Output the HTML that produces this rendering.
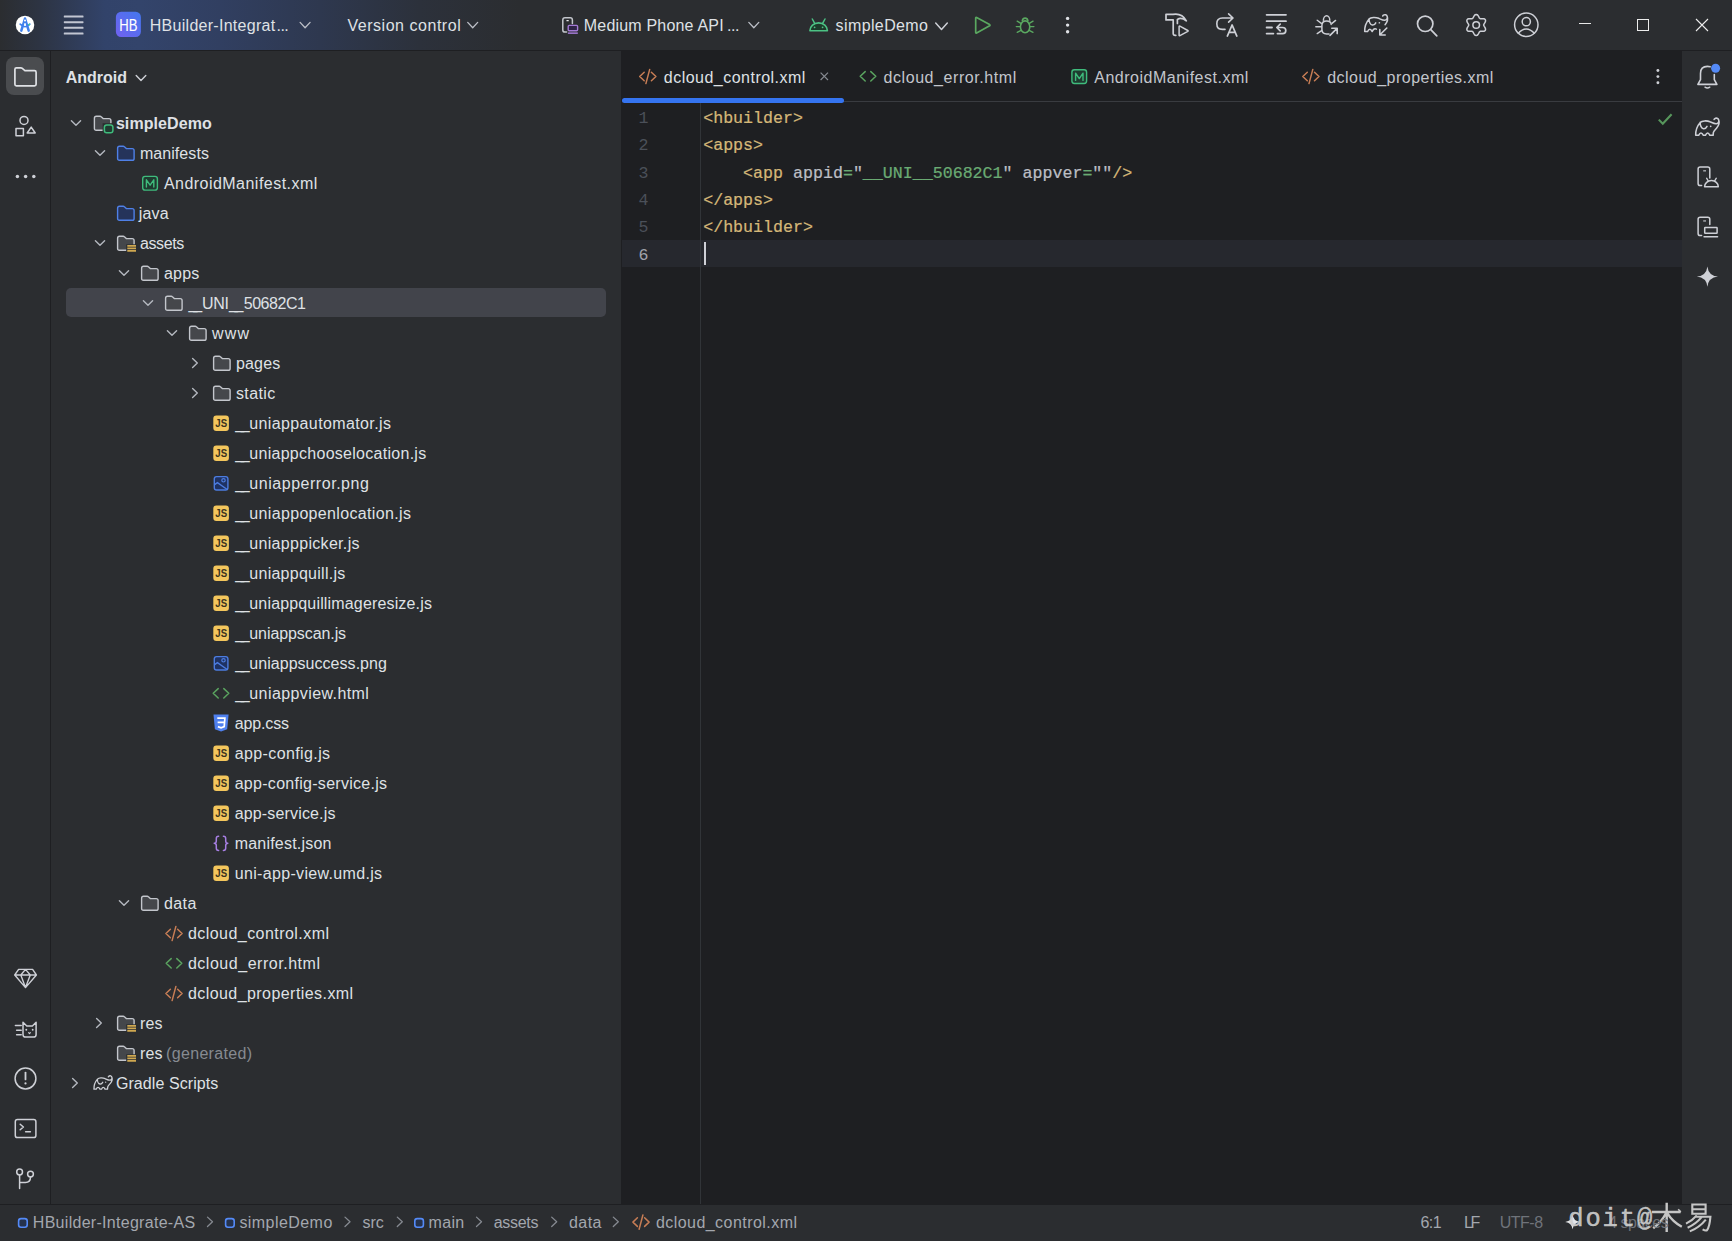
<!DOCTYPE html>
<html><head><meta charset="utf-8"><title>Android Studio</title><style>
html,body{margin:0;padding:0}
body{width:1732px;height:1241px;position:relative;overflow:hidden;background:#2b2d30;font-family:"Liberation Sans",sans-serif}
.t{position:absolute;white-space:pre;}
.m{position:absolute;white-space:pre;font:16.64px/27.45px "Liberation Mono",monospace;}
.c{-webkit-text-stroke-width:0.22px}
.a{position:absolute}
svg{position:absolute;overflow:visible}
</style></head>
<body>
<div class="a" style="left:0;top:0;width:1732px;height:50px;background:linear-gradient(to right,#2b2d30 0px,#2d3443 40px,#32436a 105px,#33446b 140px,#313f61 220px,#2e384f 320px,#2c313b 420px,#2b2d30 520px)"></div>
<div class="a" style="left:0;top:50px;width:1732px;height:1px;background:#1e1f22"></div>
<div class="a" style="left:50px;top:51px;width:1px;height:1153px;background:#1e1f22"></div>
<div class="a" style="left:621px;top:51px;width:1061px;height:1153px;background:#1e1f22"></div>
<div class="a" style="left:622px;top:101px;width:1060px;height:1px;background:#393b40"></div>
<div class="a" style="left:622px;top:97.5px;width:222px;height:5px;border-radius:2.5px;background:#3574f0"></div>
<div class="a" style="left:0;top:1204px;width:1732px;height:1px;background:#1e1f22"></div>
<div class="a" style="left:6px;top:57px;width:38px;height:38px;border-radius:8px;background:#4a4c4f"></div>
<div class="a" style="left:66px;top:287.5px;width:540px;height:29.7px;border-radius:5px;background:#42444b"></div>
<div style="position:absolute;left:622px;top:240px;width:1060px;height:27px;background:#26282e"></div><div style="position:absolute;left:700px;top:103px;width:1px;height:1101px;background:#313438"></div><span class="m" style="left:638.4px;top:104.65px;color:#4b5059">1</span><span class="m c" style="left:703.2px;top:104.65px"><span style="color:#d5b778">&lt;hbuilder&gt;</span></span><span class="m" style="left:638.4px;top:132.10px;color:#4b5059">2</span><span class="m c" style="left:703.2px;top:132.10px"><span style="color:#d5b778">&lt;apps&gt;</span></span><span class="m" style="left:638.4px;top:159.55px;color:#4b5059">3</span><span class="m c" style="left:703.2px;top:159.55px"><span style="color:#d5b778">    &lt;app</span><span style="color:#bcbec4"> appid</span><span style="color:#6aab73">=</span><span style="color:#bcbec4">"</span><span style="color:#6aab73">__UNI__50682C1</span><span style="color:#bcbec4">"</span><span style="color:#bcbec4"> appver</span><span style="color:#6aab73">=</span><span style="color:#bcbec4">""</span><span style="color:#d5b778">/&gt;</span></span><span class="m" style="left:638.4px;top:187.00px;color:#4b5059">4</span><span class="m c" style="left:703.2px;top:187.00px"><span style="color:#d5b778">&lt;/apps&gt;</span></span><span class="m" style="left:638.4px;top:214.45px;color:#4b5059">5</span><span class="m c" style="left:703.2px;top:214.45px"><span style="color:#d5b778">&lt;/hbuilder&gt;</span></span><span class="m" style="left:638.4px;top:241.90px;color:#a1a3ab">6</span><div style="position:absolute;left:704px;top:242px;width:1.5px;height:23px;background:#ced0d6"></div>
<svg width="0" height="0" style="position:absolute"><defs><symbol id="i-folder" viewBox="0 0 20 20" overflow="visible"><path d="M1.6 5.2Q1.6 3.3 3.5 3.3H7.2Q7.9 3.3 8.4 3.8L10.3 5.6H16.2Q18.1 5.6 18.1 7.5V15.4Q18.1 17.3 16.2 17.3H3.5Q1.6 17.3 1.6 15.4Z" fill="#45474b" stroke="#c3c6cc" stroke-width="1.4" stroke-linejoin="round"/></symbol><symbol id="i-bfolder" viewBox="0 0 20 20" overflow="visible"><path d="M1.6 5.2Q1.6 3.3 3.5 3.3H7.2Q7.9 3.3 8.4 3.8L10.3 5.6H16.2Q18.1 5.6 18.1 7.5V15.4Q18.1 17.3 16.2 17.3H3.5Q1.6 17.3 1.6 15.4Z" fill="#25335a" stroke="#4f80e6" stroke-width="1.4" stroke-linejoin="round"/></symbol><symbol id="i-module" viewBox="0 0 20 20" overflow="visible"><g transform="translate(0.8 0)"><path d="M1.6 5.2Q1.6 3.3 3.5 3.3H7.2Q7.9 3.3 8.4 3.8L10.3 5.6H16.2Q18.1 5.6 18.1 7.5V15.4Q18.1 17.3 16.2 17.3H3.5Q1.6 17.3 1.6 15.4Z" fill="#45474b" stroke="#c3c6cc" stroke-width="1.4" stroke-linejoin="round"/></g><rect x="10.6" y="10.2" width="12" height="12" fill="#2b2d30"/><rect x="12.4" y="12" width="8.5" height="7.8" rx="2.3" fill="#1f3b30" stroke="#3fbb7c" stroke-width="1.5"/></symbol><symbol id="i-resfolder" viewBox="0 0 20 20" overflow="visible"><path d="M1.6 5.2Q1.6 3.3 3.5 3.3H7.2Q7.9 3.3 8.4 3.8L10.3 5.6H16.2Q18.1 5.6 18.1 7.5V15.4Q18.1 17.3 16.2 17.3H3.5Q1.6 17.3 1.6 15.4Z" fill="#45474b" stroke="#c3c6cc" stroke-width="1.4" stroke-linejoin="round"/><rect x="10.2" y="11.3" width="11" height="9" fill="#2b2d30"/><path d="M11.3 12.9H20M11.3 15.4H20M11.3 17.9H20" stroke="#cfa850" stroke-width="1.6" fill="none"/></symbol><symbol id="i-manifest" viewBox="0 0 20 20" overflow="visible"><rect x="2.7" y="3.4" width="14.7" height="13.7" rx="2.4" fill="#1f3b30" stroke="#3fbb7c" stroke-width="1.4"/><path d="M6.4 14V6.8L10.1 12.2L13.8 6.8V14" fill="none" stroke="#3fbb7c" stroke-width="1.4" stroke-linejoin="round" stroke-linecap="round"/></symbol><symbol id="i-js" viewBox="0 0 20 20" overflow="visible"><rect x="2.3" y="2.4" width="15.6" height="15.5" rx="3" fill="#f3c65c"/><text x="10.2" y="14.1" text-anchor="middle" font-family="Liberation Sans" font-weight="700" font-size="10.6" fill="#3a3320" textLength="11.8" lengthAdjust="spacingAndGlyphs">JS</text></symbol><symbol id="i-img" viewBox="0 0 20 20" overflow="visible"><rect x="3.3" y="3.6" width="13.6" height="13.4" rx="2.2" fill="#1f3262" stroke="#4c7cdf" stroke-width="1.4"/><circle cx="12.5" cy="7.3" r="1.7" fill="none" stroke="#4c7cdf" stroke-width="1.2"/><path d="M3.6 11.6L6.4 9.6L16.6 16.8" fill="none" stroke="#4c7cdf" stroke-width="1.3"/></symbol><symbol id="i-html" viewBox="0 0 20 20" overflow="visible"><path d="M7.2 5.6L2.2 10.3L7.2 15M12.8 5.6L17.8 10.3L12.8 15" fill="none" stroke="#5aa35f" stroke-width="1.5" stroke-linecap="round" stroke-linejoin="round"/></symbol><symbol id="i-xml" viewBox="0 0 20 20" overflow="visible"><path d="M6.4 6.2L1.9 10.5L6.4 14.8M13.6 6.2L18.1 10.5L13.6 14.8M11.9 3.4L8.1 17.6" fill="none" stroke="#c77d55" stroke-width="1.5" stroke-linecap="round" stroke-linejoin="round"/></symbol><symbol id="i-css" viewBox="0 0 20 20" overflow="visible"><path d="M2.5 1.4H17.6L16.2 16.2L10.05 18.6L3.9 16.2Z" fill="#4f80ee"/><path d="M6.3 5.2H13.9L13.2 13.6L10.05 14.8L6.9 13.6M6.6 9.3H13.5" fill="none" stroke="#fff" stroke-width="1.7"/></symbol><symbol id="i-json" viewBox="0 0 20 20" overflow="visible"><path d="M7.6 3.2Q5.3 3.2 5.3 5.4V8Q5.3 10.3 3.2 10.3Q5.3 10.3 5.3 12.6V15.2Q5.3 17.4 7.6 17.4M12.4 3.2Q14.7 3.2 14.7 5.4V8Q14.7 10.3 16.8 10.3Q14.7 10.3 14.7 12.6V15.2Q14.7 17.4 12.4 17.4" fill="none" stroke="#a77fe3" stroke-width="1.5" stroke-linecap="round" stroke-linejoin="round"/></symbol><symbol id="i-gradle" viewBox="0 0 20 20" overflow="visible"><g transform="translate(1.4 2.2) scale(0.78)"><path d="M0.7 17.9C0.5 13 2.2 8.5 5.2 5C7 3.2 12 3 15 4.4C17.5 5.5 19.5 6.6 21.3 6.4C23.3 6.1 24.2 4.4 23.7 2.6C23.2 0.8 21.2 0.2 19.9 1.2C19.3 1.7 19.1 2.1 19.1 2.1M23.7 2.6C24.8 5.5 23.5 8.5 21.5 10.8C20 12.5 18.8 13.5 18.4 15L18.1 17.9H14.9Q12.6 13.3 10.4 17.9H8.4Q5.9 13.3 3.6 17.9H0.7M5.2 5C5 8 6.5 11 8.5 11.3C10 11.5 11.5 10 12 9" fill="none" stroke="#ced0d6" stroke-width="1.66667" stroke-linecap="round" stroke-linejoin="round" /><circle cx="15.7" cy="8.9" r="0.85" fill="#ced0d6"/></g></symbol><g id="cd"><path d="M-4.6 -2.3L0 2.3L4.6 -2.3" fill="none" stroke="#b4b8bf" stroke-width="1.4" stroke-linecap="round" stroke-linejoin="round"/></g><g id="cr"><path d="M-2.4 -4.6L2.3 0L-2.4 4.6" fill="none" stroke="#b4b8bf" stroke-width="1.4" stroke-linecap="round" stroke-linejoin="round"/></g></defs></svg><svg width="20" height="20" style="left:92px;top:113px"><use href="#i-module"/></svg><svg width="1" height="1" style="left:76px;top:123.2px"><use href="#cd"/></svg><svg width="20" height="20" style="left:116px;top:143px"><use href="#i-bfolder"/></svg><svg width="1" height="1" style="left:100px;top:153.2px"><use href="#cd"/></svg><svg width="20" height="20" style="left:140px;top:173px"><use href="#i-manifest"/></svg><svg width="20" height="20" style="left:116px;top:203px"><use href="#i-bfolder"/></svg><svg width="20" height="20" style="left:116px;top:233px"><use href="#i-resfolder"/></svg><svg width="1" height="1" style="left:100px;top:243.2px"><use href="#cd"/></svg><svg width="20" height="20" style="left:140px;top:263px"><use href="#i-folder"/></svg><svg width="1" height="1" style="left:124px;top:273.2px"><use href="#cd"/></svg><svg width="20" height="20" style="left:164px;top:293px"><use href="#i-folder"/></svg><svg width="1" height="1" style="left:148px;top:303.2px"><use href="#cd"/></svg><svg width="20" height="20" style="left:188px;top:323px"><use href="#i-folder"/></svg><svg width="1" height="1" style="left:172px;top:333.2px"><use href="#cd"/></svg><svg width="20" height="20" style="left:212px;top:353px"><use href="#i-folder"/></svg><svg width="1" height="1" style="left:195.4px;top:363.2px"><use href="#cr"/></svg><svg width="20" height="20" style="left:212px;top:383px"><use href="#i-folder"/></svg><svg width="1" height="1" style="left:195.4px;top:393.2px"><use href="#cr"/></svg><svg width="20" height="20" style="left:211.1px;top:413px"><use href="#i-js"/></svg><svg width="20" height="20" style="left:211.1px;top:443px"><use href="#i-js"/></svg><svg width="20" height="20" style="left:211.1px;top:473px"><use href="#i-img"/></svg><svg width="20" height="20" style="left:211.1px;top:503px"><use href="#i-js"/></svg><svg width="20" height="20" style="left:211.1px;top:533px"><use href="#i-js"/></svg><svg width="20" height="20" style="left:211.1px;top:563px"><use href="#i-js"/></svg><svg width="20" height="20" style="left:211.1px;top:593px"><use href="#i-js"/></svg><svg width="20" height="20" style="left:211.1px;top:623px"><use href="#i-js"/></svg><svg width="20" height="20" style="left:211.1px;top:653px"><use href="#i-img"/></svg><svg width="20" height="20" style="left:211.1px;top:683px"><use href="#i-html"/></svg><svg width="20" height="20" style="left:211.1px;top:713px"><use href="#i-css"/></svg><svg width="20" height="20" style="left:211.1px;top:743px"><use href="#i-js"/></svg><svg width="20" height="20" style="left:211.1px;top:773px"><use href="#i-js"/></svg><svg width="20" height="20" style="left:211.1px;top:803px"><use href="#i-js"/></svg><svg width="20" height="20" style="left:211.1px;top:833px"><use href="#i-json"/></svg><svg width="20" height="20" style="left:211.1px;top:863px"><use href="#i-js"/></svg><svg width="20" height="20" style="left:140px;top:893px"><use href="#i-folder"/></svg><svg width="1" height="1" style="left:124px;top:903.2px"><use href="#cd"/></svg><svg width="20" height="20" style="left:164px;top:923px"><use href="#i-xml"/></svg><svg width="20" height="20" style="left:164px;top:953px"><use href="#i-html"/></svg><svg width="20" height="20" style="left:164px;top:983px"><use href="#i-xml"/></svg><svg width="20" height="20" style="left:116px;top:1013px"><use href="#i-resfolder"/></svg><svg width="1" height="1" style="left:99.4px;top:1023.2px"><use href="#cr"/></svg><svg width="20" height="20" style="left:116px;top:1043px"><use href="#i-resfolder"/></svg><svg width="20" height="20" style="left:92px;top:1073px"><use href="#i-gradle"/></svg><svg width="1" height="1" style="left:75.4px;top:1083.2px"><use href="#cr"/></svg><svg width="1732" height="1241" style="left:0;top:0"><defs><linearGradient id="hbg" x1="1" y1="0" x2="0" y2="1"><stop offset="0" stop-color="#4377ee"/><stop offset="1" stop-color="#7161f0"/></linearGradient></defs><circle cx="25" cy="24.9" r="9.25" fill="#fff"/><path d="M25 18.6L21.3 30.6M25 18.6L28.7 30.6" fill="none" stroke="#4081ec" stroke-width="2.5" stroke-linecap="round"/><path d="M20.2 24.2Q25 29 29.8 24.2" fill="none" stroke="#4081ec" stroke-width="1.7" stroke-linecap="round"/><circle cx="25" cy="20.6" r="1" fill="#fff"/><path d="M23.9 25.8H26.1L25.6 23.2H24.4Z" fill="#fff"/><circle cx="29.3" cy="24.6" r="0.9" fill="#3ddc84"/><rect x="63.8" y="15.5" width="19.7" height="2" rx="0.6" fill="#c2c6d2"/><rect x="63.8" y="21.2" width="19.7" height="2" rx="0.6" fill="#c2c6d2"/><rect x="63.8" y="26.8" width="19.7" height="2" rx="0.6" fill="#c2c6d2"/><rect x="63.8" y="32.5" width="19.7" height="2" rx="0.6" fill="#c2c6d2"/><rect x="115.9" y="11.8" width="25" height="25.2" rx="5.2" fill="url(#hbg)"/><text x="119.3" y="30.8" font-family="Liberation Sans" font-size="16.2" fill="#fff" stroke="#fff" stroke-width="0.12" textLength="18.2" lengthAdjust="spacingAndGlyphs">HB</text><path d="M300.1 22.4L305.1 27.8L310.1 22.4" fill="none" stroke="#bcbfc7" stroke-width="1.3" stroke-linecap="round" stroke-linejoin="round" /><path d="M467.7 22.4L472.7 27.8L477.7 22.4" fill="none" stroke="#bcbfc7" stroke-width="1.3" stroke-linecap="round" stroke-linejoin="round" /><path d="M748.8 22.4L753.8 27.8L758.8 22.4" fill="none" stroke="#bcbfc7" stroke-width="1.3" stroke-linecap="round" stroke-linejoin="round" /><path d="M935.7 23L941.5 29.4L947.3 23" fill="none" stroke="#ced0d6" stroke-width="1.5" stroke-linecap="round" stroke-linejoin="round" /><path d="M566.6 32.1H565Q562.8 32.1 562.8 29.9V20Q562.8 17.8 565 17.8H570.2Q572.4 17.8 572.4 20V23.6" fill="none" stroke="#c3c6cc" stroke-width="1.5" stroke-linecap="round" stroke-linejoin="round" /><rect x="566.4" y="20.1" width="2.4" height="1.1" rx="0.5" fill="#e8e9ec"/><rect x="568.2" y="25.4" width="9.4" height="5.3" rx="1" fill="#2f2447" stroke="#a47ad6" stroke-width="1.4"/><rect x="567.9" y="32.4" width="9.9" height="1.5" fill="#a47ad6"/><path d="M809.9 30.8A8.75 7.9 0 0 1 827.4 30.8Z" fill="#1d3b2b" stroke="#4cc284" stroke-width="1.6" stroke-linejoin="round"/><path d="M812.3 19L814.7 23.4M825 19L822.6 23.4" fill="none" stroke="#4cc284" stroke-width="1.5" stroke-linecap="round" stroke-linejoin="round" /><circle cx="814.6" cy="27.3" r="0.9" fill="#4cc284"/><circle cx="822.6" cy="27.3" r="0.9" fill="#4cc284"/><path d="M975.7 18V32.4Q975.7 33.4 976.6 32.9L989.6 25.8Q990.4 25.2 989.6 24.6L976.6 17.5Q975.7 17 975.7 18Z" fill="none" stroke="#5aa860" stroke-width="1.7" stroke-linecap="round" stroke-linejoin="round" /><ellipse cx="1025.1" cy="26.8" rx="4.7" ry="5.9" fill="none" stroke="#5aa860" stroke-width="1.6" stroke-linecap="round" stroke-linejoin="round" /><path d="M1022.3 20.6A2.9 3.4 0 0 1 1027.9 20.6" fill="none" stroke="#5aa860" stroke-width="1.6" stroke-linecap="round" stroke-linejoin="round" /><path d="M1020.4 26.6H1016.3M1029.8 26.6H1033.9M1020.9 23.4L1017.2 21.2M1029.3 23.4L1033 21.2M1021 30.4L1017.2 32.3M1029.2 30.4L1033 32.3" fill="none" stroke="#5aa860" stroke-width="1.4" stroke-linecap="round" stroke-linejoin="round" /><circle cx="1067.6" cy="18.4" r="1.7" fill="#dfe1e5"/><circle cx="1067.6" cy="25.1" r="1.7" fill="#dfe1e5"/><circle cx="1067.6" cy="31.8" r="1.7" fill="#dfe1e5"/><path d="M1173.2 19.9H1166V14.3H1173Q1182 12.8 1186.3 20.8Q1181.4 17 1177.4 19.4V23.4M1173.2 19.9V33.6Q1173.2 35.7 1175.8 35.3" fill="none" stroke="#ced0d6" stroke-width="1.7" stroke-linecap="round" stroke-linejoin="round" /><path d="M1179.1 26.6V35.2Q1179.1 36 1179.9 35.6L1187.8 31.3Q1188.5 30.9 1187.8 30.5L1179.9 26.2Q1179.1 25.8 1179.1 26.6Z" fill="none" stroke="#ced0d6" stroke-width="1.5" stroke-linecap="round" stroke-linejoin="round" /><path d="M1225 29.4H1222.4Q1216.8 29.4 1216.8 23.7Q1216.8 18 1222.4 18H1232.6M1228.6 13.8L1233 18L1228.6 22.2" fill="none" stroke="#ced0d6" stroke-width="1.6" stroke-linecap="round" stroke-linejoin="round" /><path d="M1227.4 36L1232.1 25L1236.8 36M1229 32.4H1235.2" fill="none" stroke="#ced0d6" stroke-width="1.8" stroke-linecap="round" stroke-linejoin="round" /><path d="M1266.6 14.8H1286M1266.6 21.2H1286M1266.6 27.5H1272M1266.6 33.6H1273.4" fill="none" stroke="#ced0d6" stroke-width="1.8" stroke-linecap="round" stroke-linejoin="round" stroke-linecap="butt"/><path d="M1277.4 33.6H1282.6Q1285.8 33.6 1285.8 30.5Q1285.8 27.5 1282.6 27.5H1277M1280.2 24.2L1276.8 27.5L1280.2 30.8" fill="none" stroke="#ced0d6" stroke-width="1.7" stroke-linecap="round" stroke-linejoin="round" /><path d="M1329 33.9H1326.6Q1321.9 33.9 1321.9 29.2V25.6Q1321.9 21 1326.6 21Q1331 21 1331.2 24.4" fill="none" stroke="#ced0d6" stroke-width="1.5" stroke-linecap="round" stroke-linejoin="round" /><path d="M1323.4 20.2A3.2 4.4 0 0 1 1329.8 20.2" fill="none" stroke="#ced0d6" stroke-width="1.5" stroke-linecap="round" stroke-linejoin="round" /><path d="M1321.4 23.4L1317.2 20.2M1321.4 26.8H1315.8M1321.6 30.6L1317.2 33.6M1332 23.4L1335.6 20.4" fill="none" stroke="#ced0d6" stroke-width="1.4" stroke-linecap="round" stroke-linejoin="round" /><path d="M1330 35.4L1337 28.4M1331.8 28.2H1337.2V33.6" fill="none" stroke="#ced0d6" stroke-width="1.6" stroke-linecap="round" stroke-linejoin="round" /><g transform="translate(1364 14) scale(0.98)"><path d="M0.7 17.9C0.5 13 2.2 8.5 5.2 5C7 3.2 12 3 15 4.4C17.5 5.5 19.5 6.6 21.3 6.4C23.3 6.1 24.2 4.4 23.7 2.6C23.2 0.8 21.2 0.2 19.9 1.2C19.3 1.7 19.1 2.1 19.1 2.1M23.7 2.6C24.8 5.5 23.5 8.5 21.5 10.9M0.7 17.9H3.6Q5.9 13.3 8.4 17.9Q10.2 14 12.6 15.4M5.2 5C5 8 6.5 11 8.5 11.3C10 11.5 11.5 10 12 9" fill="none" stroke="#ced0d6" stroke-width="1.55" stroke-linecap="round" stroke-linejoin="round" /><circle cx="15.7" cy="8.9" r="0.85" fill="#ced0d6"/></g><path d="M1386.8 28L1380 34.8M1379.8 29.6V35H1385.2" fill="none" stroke="#ced0d6" stroke-width="1.6" stroke-linecap="round" stroke-linejoin="round" /><circle cx="1425.2" cy="23.8" r="7.7" fill="none" stroke="#ced0d6" stroke-width="1.7" stroke-linecap="round" stroke-linejoin="round" /><path d="M1430.8 29.6L1436.8 35.8" fill="none" stroke="#ced0d6" stroke-width="1.7" stroke-linecap="round" stroke-linejoin="round" /><path d="M1476.20 14.45L1477.10 14.70L1477.90 15.37L1478.53 16.31L1479.01 17.27L1479.44 18.06L1479.92 18.55L1480.59 18.73L1481.49 18.70L1482.56 18.64L1483.69 18.72L1484.67 19.07L1485.34 19.72L1485.57 20.63L1485.39 21.66L1484.89 22.67L1484.30 23.57L1483.83 24.33L1483.65 25.00L1483.83 25.67L1484.30 26.43L1484.89 27.33L1485.39 28.34L1485.57 29.37L1485.34 30.27L1484.67 30.93L1483.69 31.28L1482.56 31.36L1481.49 31.30L1480.59 31.27L1479.92 31.45L1479.44 31.94L1479.01 32.73L1478.53 33.69L1477.90 34.63L1477.10 35.30L1476.20 35.55L1475.30 35.30L1474.50 34.63L1473.87 33.69L1473.39 32.73L1472.96 31.94L1472.48 31.45L1471.81 31.27L1470.91 31.30L1469.84 31.36L1468.71 31.28L1467.73 30.93L1467.06 30.28L1466.83 29.37L1467.01 28.34L1467.51 27.33L1468.10 26.43L1468.57 25.67L1468.75 25.00L1468.57 24.33L1468.10 23.57L1467.51 22.67L1467.01 21.66L1466.83 20.63L1467.06 19.72L1467.73 19.07L1468.71 18.72L1469.84 18.64L1470.91 18.70L1471.81 18.73L1472.48 18.55L1472.96 18.06L1473.39 17.27L1473.87 16.31L1474.50 15.37L1475.30 14.70Z" fill="none" stroke="#ced0d6" stroke-width="1.5" stroke-linecap="round" stroke-linejoin="round" /><circle cx="1476.2" cy="25" r="3.3" fill="none" stroke="#ced0d6" stroke-width="1.5" stroke-linecap="round" stroke-linejoin="round" /><circle cx="1526.3" cy="24.7" r="11.7" fill="none" stroke="#ced0d6" stroke-width="1.5" stroke-linecap="round" stroke-linejoin="round" /><circle cx="1526.3" cy="21.7" r="4.1" fill="none" stroke="#ced0d6" stroke-width="1.5" stroke-linecap="round" stroke-linejoin="round" /><path d="M1518.3 33.2Q1526.3 24.6 1534.3 33.2" fill="none" stroke="#ced0d6" stroke-width="1.5" stroke-linecap="round" stroke-linejoin="round" /><rect x="1579" y="23" width="12" height="1" fill="#e8e8e8"/><rect x="1637.5" y="19.5" width="11" height="11" fill="none" stroke="#ededed" stroke-width="1"/><path d="M1696 19L1708 31M1708 19L1696 31" stroke="#ededed" stroke-width="1.1" fill="none"/><path d="M14.9 84.2V69.4Q14.9 67.9 16.4 67.9H20.9Q21.7 67.9 22.3 68.4L24.9 70.6H34.5Q36.1 70.6 36.1 72.2V84.2Q36.1 85.8 34.5 85.8H16.4Q14.9 85.8 14.9 84.2Z" fill="none" stroke="#dfe1e5" stroke-width="1.7" stroke-linecap="round" stroke-linejoin="round" /><circle cx="24" cy="120.4" r="4" fill="none" stroke="#ced0d6" stroke-width="1.5" stroke-linecap="round" stroke-linejoin="round" /><rect x="16" y="128.6" width="7.4" height="7.2" fill="none" stroke="#ced0d6" stroke-width="1.5" stroke-linecap="round" stroke-linejoin="round" /><path d="M31.2 127.1L35.2 133H27.2Z" fill="none" stroke="#ced0d6" stroke-width="1.5" stroke-linecap="round" stroke-linejoin="round" /><circle cx="17.4" cy="176.5" r="1.75" fill="#ced0d6"/><circle cx="25.6" cy="176.5" r="1.75" fill="#ced0d6"/><circle cx="33.8" cy="176.5" r="1.75" fill="#ced0d6"/><path d="M18.6 969.4H32.6L36.4 975L25.5 987.6L14.7 975ZM14.7 975H36.4M25.5 969.4L20.8 975L25.5 987.6L30.3 975Z" fill="none" stroke="#ced0d6" stroke-width="1.4" stroke-linecap="round" stroke-linejoin="round" /><path d="M23 1022.3L26.8 1026H32.4L36.1 1022.3V1034.4Q36.1 1037 33.5 1037H25.6Q23 1037 23 1034.4Z" fill="none" stroke="#ced0d6" stroke-width="1.5" stroke-linecap="round" stroke-linejoin="round" /><circle cx="26.3" cy="1029.8" r="0.95" fill="#ced0d6"/><circle cx="32.7" cy="1029.8" r="0.95" fill="#ced0d6"/><path d="M28.6 1032.6L29.5 1033.6L30.4 1032.6" fill="none" stroke="#ced0d6" stroke-width="1.1" stroke-linecap="round" stroke-linejoin="round" /><path d="M15.4 1025.6H21.2M16.6 1030.2H21.2M16.6 1034.7H21.2" fill="none" stroke="#ced0d6" stroke-width="1.5" stroke-linecap="round" stroke-linejoin="round" /><circle cx="25.5" cy="1078.5" r="10.4" fill="none" stroke="#ced0d6" stroke-width="1.5" stroke-linecap="round" stroke-linejoin="round" /><path d="M25.5 1072.6V1079.4" fill="none" stroke="#ced0d6" stroke-width="1.8" stroke-linecap="round" stroke-linejoin="round" /><circle cx="25.5" cy="1083.4" r="1.1" fill="#ced0d6"/><rect x="15.3" y="1119.5" width="20.6" height="18.1" rx="2.2" fill="none" stroke="#ced0d6" stroke-width="1.5" stroke-linecap="round" stroke-linejoin="round" /><path d="M20.2 1124.2L23.4 1127L20.2 1129.8M25.6 1131.8H30.4" fill="none" stroke="#ced0d6" stroke-width="1.5" stroke-linecap="round" stroke-linejoin="round" /><circle cx="19.6" cy="1172" r="2.9" fill="none" stroke="#ced0d6" stroke-width="1.5" stroke-linecap="round" stroke-linejoin="round" /><circle cx="30.5" cy="1174.1" r="2.9" fill="none" stroke="#ced0d6" stroke-width="1.5" stroke-linecap="round" stroke-linejoin="round" /><path d="M19.6 1175V1188.6M30.5 1177.1Q30.5 1182.6 25.4 1182.6H19.6" fill="none" stroke="#ced0d6" stroke-width="1.5" stroke-linecap="round" stroke-linejoin="round" /><path d="M136.2 75.6L141 80.6L145.8 75.6" fill="none" stroke="#ced0d6" stroke-width="1.4" stroke-linecap="round" stroke-linejoin="round" /><path transform="translate(637.8 66)" d="M6.4 6.2L1.9 10.5L6.4 14.8M13.6 6.2L18.1 10.5L13.6 14.8M11.9 3.4L8.1 17.6" fill="none" stroke="#c77d55" stroke-width="1.5" stroke-linecap="round" stroke-linejoin="round" /><path transform="translate(858 66)" d="M7.2 5.6L2.2 10.3L7.2 15M12.8 5.6L17.8 10.3L12.8 15" fill="none" stroke="#5aa35f" stroke-width="1.5" stroke-linecap="round" stroke-linejoin="round" /><g transform="translate(1069.2 66.4)"><rect x="2.7" y="3.4" width="14.7" height="13.7" rx="2.4" fill="#1f3b30" stroke="#3fbb7c" stroke-width="1.4"/><path d="M6.4 14V6.8L10.1 12.2L13.8 6.8V14" fill="none" stroke="#3fbb7c" stroke-width="1.4" stroke-linecap="round" stroke-linejoin="round" /></g><path transform="translate(1300.9 66)" d="M6.4 6.2L1.9 10.5L6.4 14.8M13.6 6.2L18.1 10.5L13.6 14.8M11.9 3.4L8.1 17.6" fill="none" stroke="#c77d55" stroke-width="1.5" stroke-linecap="round" stroke-linejoin="round" /><path d="M820.6 72.6L828 80M828 72.6L820.6 80" stroke="#868a91" stroke-width="1.2" fill="none"/><circle cx="1657.9" cy="70.5" r="1.45" fill="#ced0d6"/><circle cx="1657.9" cy="76.6" r="1.45" fill="#ced0d6"/><circle cx="1657.9" cy="82.7" r="1.45" fill="#ced0d6"/><path d="M1658.8 119.6L1662.8 123.8L1671.6 114.2" fill="none" stroke="#57965c" stroke-width="2.1"/><path d="M1697.9 84.4H1716.9L1714.3 79.6V74.6M1697.9 84.4L1700.5 79.6V73.4Q1700.5 66.4 1707.4 66.4Q1709 66.4 1710.2 66.8" fill="none" stroke="#ced0d6" stroke-width="1.6" stroke-linecap="round" stroke-linejoin="round" /><path d="M1705 87.2Q1707.4 88.8 1709.8 87.2" fill="none" stroke="#ced0d6" stroke-width="1.4" stroke-linecap="round" stroke-linejoin="round" /><circle cx="1715.6" cy="68.2" r="4.5" fill="#548af7"/><g transform="translate(1695 117.4) scale(1)"><path d="M0.7 17.9C0.5 13 2.2 8.5 5.2 5C7 3.2 12 3 15 4.4C17.5 5.5 19.5 6.6 21.3 6.4C23.3 6.1 24.2 4.4 23.7 2.6C23.2 0.8 21.2 0.2 19.9 1.2C19.3 1.7 19.1 2.1 19.1 2.1M23.7 2.6C24.8 5.5 23.5 8.5 21.5 10.8C20 12.5 18.8 13.5 18.4 15L18.1 17.9H14.9Q12.6 13.3 10.4 17.9H8.4Q5.9 13.3 3.6 17.9H0.7M5.2 5C5 8 6.5 11 8.5 11.3C10 11.5 11.5 10 12 9" fill="none" stroke="#ced0d6" stroke-width="1.55" stroke-linecap="round" stroke-linejoin="round" /><circle cx="15.7" cy="8.9" r="0.85" fill="#ced0d6"/></g><path d="M1701.6 185.5H1700.2Q1698.1 185.5 1698.1 183.4V169.2Q1698.1 167.1 1700.2 167.1H1707.7Q1709.8 167.1 1709.8 169.2V178" fill="none" stroke="#ced0d6" stroke-width="1.5" stroke-linecap="round" stroke-linejoin="round" /><rect x="1703.2" y="170.3" width="2.8" height="1.1" fill="#ced0d6"/><path d="M1704.6 186.8A6.85 6.2 0 0 1 1718.3 186.8Z" fill="none" stroke="#ced0d6" stroke-width="1.5" stroke-linecap="round" stroke-linejoin="round" /><path d="M1706.6 178.2L1708.2 180.8M1716.3 178.2L1714.7 180.8" fill="none" stroke="#ced0d6" stroke-width="1.3" stroke-linecap="round" stroke-linejoin="round" /><path d="M1701.6 235.6H1700.2Q1698.1 235.6 1698.1 233.5V219.3Q1698.1 217.2 1700.2 217.2H1707.7Q1709.8 217.2 1709.8 219.3V224.4" fill="none" stroke="#ced0d6" stroke-width="1.5" stroke-linecap="round" stroke-linejoin="round" /><rect x="1703.2" y="220.4" width="2.8" height="1.1" fill="#ced0d6"/><rect x="1704.7" y="227.4" width="12.4" height="5.9" rx="0.6" fill="none" stroke="#ced0d6" stroke-width="1.5" stroke-linecap="round" stroke-linejoin="round" /><path d="M1704 236.8H1717.6" fill="none" stroke="#ced0d6" stroke-width="1.4" stroke-linecap="round" stroke-linejoin="round" stroke-linecap="butt"/><path d="M1707.4 266.4Q1708.4 275.6 1718 276.6Q1708.4 277.6 1707.4 286.8Q1706.4 277.6 1696.8 276.6Q1706.4 275.6 1707.4 266.4Z" fill="#ced0d6"/><rect x="18.6" y="1218.6" width="8.6" height="8.6" rx="2.4" fill="#25324d" stroke="#548af7" stroke-width="1.6"/><rect x="225.6" y="1218.6" width="8.6" height="8.6" rx="2.4" fill="#25324d" stroke="#548af7" stroke-width="1.6"/><rect x="414.8" y="1218.6" width="8.6" height="8.6" rx="2.4" fill="#25324d" stroke="#548af7" stroke-width="1.6"/><path d="M207.5 1217.1L212.5 1221.8L207.5 1226.5" fill="none" stroke="#868a91" stroke-width="1.3" stroke-linecap="round" stroke-linejoin="round" /><path d="M345 1217.1L350 1221.8L345 1226.5" fill="none" stroke="#868a91" stroke-width="1.3" stroke-linecap="round" stroke-linejoin="round" /><path d="M397.3 1217.1L402.3 1221.8L397.3 1226.5" fill="none" stroke="#868a91" stroke-width="1.3" stroke-linecap="round" stroke-linejoin="round" /><path d="M476.5 1217.1L481.5 1221.8L476.5 1226.5" fill="none" stroke="#868a91" stroke-width="1.3" stroke-linecap="round" stroke-linejoin="round" /><path d="M551.7 1217.1L556.7 1221.8L551.7 1226.5" fill="none" stroke="#868a91" stroke-width="1.3" stroke-linecap="round" stroke-linejoin="round" /><path d="M613.3 1217.1L618.3 1221.8L613.3 1226.5" fill="none" stroke="#868a91" stroke-width="1.3" stroke-linecap="round" stroke-linejoin="round" /><path transform="translate(631 1211.6)" d="M6.4 6.2L1.9 10.5L6.4 14.8M13.6 6.2L18.1 10.5L13.6 14.8M11.9 3.4L8.1 17.6" fill="none" stroke="#c77d55" stroke-width="1.5" stroke-linecap="round" stroke-linejoin="round" /><path d="M1572.6 1214.6Q1573.3 1221.2 1580 1221.9Q1573.3 1222.6 1572.6 1229.2Q1571.9 1222.6 1565.2 1221.9Q1571.9 1221.2 1572.6 1214.6Z" fill="#e4e5e8"/><g fill="none" stroke="#c6c6c6" stroke-width="2.4" stroke-linecap="butt"><path d="M1666.7 1202.8V1232M1652 1212H1680.6M1666 1213.2Q1661.5 1222 1653.2 1228.2M1667.6 1213.6Q1672.5 1221.5 1681.8 1226.8"/><path d="M1678.2 1209.2L1680.8 1212" stroke-width="1.6"/><path d="M1692.3 1204.5H1705.6V1213.8H1692.3ZM1692.3 1209.2H1705.6" stroke-width="2.1"/><path d="M1696.8 1215.4Q1692.5 1220.5 1686 1223.6M1695.6 1216.8H1710.4Q1709.6 1226.5 1707 1230.2Q1705.5 1231 1702.6 1229.4M1701.6 1217.2Q1696 1224 1687.6 1227.8M1705.8 1219.6Q1699.5 1227.5 1689.8 1231.4" stroke-width="2.1"/></g></svg>
<span class="t" style='left:149.80px;top:11.00px;font:400 16px/30px "Liberation Sans", sans-serif;color:#dfe1e5;letter-spacing:0.272px;'>HBuilder-Integrat</span><span class="t" style='left:276.50px;top:11.00px;font:400 16px/30px "Liberation Sans", sans-serif;color:#dfe1e5;letter-spacing:-0.522px;'>...</span><span class="t" style='left:347.50px;top:11.00px;font:400 16px/30px "Liberation Sans", sans-serif;color:#dfe1e5;letter-spacing:0.525px;'>Version control</span><span class="t" style='left:583.80px;top:11.00px;font:400 16px/30px "Liberation Sans", sans-serif;color:#dfe1e5;letter-spacing:0.189px;'>Medium Phone API</span><span class="t" style='left:727.00px;top:11.00px;font:400 16px/30px "Liberation Sans", sans-serif;color:#dfe1e5;letter-spacing:-0.472px;'>...</span><span class="t" style='left:835.60px;top:11.00px;font:400 16px/30px "Liberation Sans", sans-serif;color:#dfe1e5;letter-spacing:0.386px;'>simpleDemo</span><span class="t" style='left:65.70px;top:63.00px;font:700 16px/30px "Liberation Sans", sans-serif;color:#dfe1e5;letter-spacing:0.012px;'>Android</span><span class="t" style='left:663.80px;top:63.00px;font:400 16px/30px "Liberation Sans", sans-serif;color:#dfe1e5;letter-spacing:0.482px;'>dcloud_control.xml</span><span class="t" style='left:883.50px;top:63.00px;font:400 16px/30px "Liberation Sans", sans-serif;color:#c3c6cc;letter-spacing:0.573px;'>dcloud_error.html</span><span class="t" style='left:1094.30px;top:63.00px;font:400 16px/30px "Liberation Sans", sans-serif;color:#c3c6cc;letter-spacing:0.503px;'>AndroidManifest.xml</span><span class="t" style='left:1327.20px;top:63.00px;font:400 16px/30px "Liberation Sans", sans-serif;color:#c3c6cc;letter-spacing:0.483px;'>dcloud_properties.xml</span><span class="t" style='left:115.90px;top:109.00px;font:700 16px/30px "Liberation Sans", sans-serif;color:#dfe1e5;letter-spacing:0.084px;'>simpleDemo</span><span class="t" style='left:139.90px;top:139.00px;font:400 16px/30px "Liberation Sans", sans-serif;color:#dfe1e5;letter-spacing:0.066px;'>manifests</span><span class="t" style='left:163.90px;top:169.00px;font:400 16px/30px "Liberation Sans", sans-serif;color:#dfe1e5;letter-spacing:0.469px;'>AndroidManifest.xml</span><span class="t" style='left:138.70px;top:199.00px;font:400 16px/30px "Liberation Sans", sans-serif;color:#dfe1e5;letter-spacing:0.214px;'>java</span><span class="t" style='left:139.90px;top:229.00px;font:400 16px/30px "Liberation Sans", sans-serif;color:#dfe1e5;letter-spacing:-0.370px;'>assets</span><span class="t" style='left:163.90px;top:259.00px;font:400 16px/30px "Liberation Sans", sans-serif;color:#dfe1e5;letter-spacing:0.232px;'>apps</span><span class="t" style='left:188.50px;top:289.00px;font:400 16px/30px "Liberation Sans", sans-serif;color:#dfe1e5;letter-spacing:-4.197px;'>__</span><span class="t" style='left:202.10px;top:289.00px;font:400 16px/30px "Liberation Sans", sans-serif;color:#dfe1e5;letter-spacing:-0.381px;'>UNI</span><span class="t" style='left:229.10px;top:289.00px;font:400 16px/30px "Liberation Sans", sans-serif;color:#dfe1e5;letter-spacing:-3.597px;'>__</span><span class="t" style='left:243.70px;top:289.00px;font:400 16px/30px "Liberation Sans", sans-serif;color:#dfe1e5;letter-spacing:-0.459px;'>50682C1</span><span class="t" style='left:211.90px;top:319.00px;font:400 16px/30px "Liberation Sans", sans-serif;color:#dfe1e5;letter-spacing:1.264px;'>www</span><span class="t" style='left:235.90px;top:349.00px;font:400 16px/30px "Liberation Sans", sans-serif;color:#dfe1e5;letter-spacing:0.202px;'>pages</span><span class="t" style='left:235.90px;top:379.00px;font:400 16px/30px "Liberation Sans", sans-serif;color:#dfe1e5;letter-spacing:0.411px;'>static</span><span class="t" style='left:235.20px;top:409.00px;font:400 16px/30px "Liberation Sans", sans-serif;color:#dfe1e5;letter-spacing:-3.297px;'>__</span><span class="t" style='left:249.30px;top:409.00px;font:400 16px/30px "Liberation Sans", sans-serif;color:#dfe1e5;letter-spacing:0.376px;'>uniappautomator.js</span><span class="t" style='left:235.20px;top:439.00px;font:400 16px/30px "Liberation Sans", sans-serif;color:#dfe1e5;letter-spacing:-3.297px;'>__</span><span class="t" style='left:249.30px;top:439.00px;font:400 16px/30px "Liberation Sans", sans-serif;color:#dfe1e5;letter-spacing:0.277px;'>uniappchooselocation.js</span><span class="t" style='left:235.20px;top:469.00px;font:400 16px/30px "Liberation Sans", sans-serif;color:#dfe1e5;letter-spacing:-3.297px;'>__</span><span class="t" style='left:249.30px;top:469.00px;font:400 16px/30px "Liberation Sans", sans-serif;color:#dfe1e5;letter-spacing:0.536px;'>uniapperror.png</span><span class="t" style='left:235.20px;top:499.00px;font:400 16px/30px "Liberation Sans", sans-serif;color:#dfe1e5;letter-spacing:-3.297px;'>__</span><span class="t" style='left:249.30px;top:499.00px;font:400 16px/30px "Liberation Sans", sans-serif;color:#dfe1e5;letter-spacing:0.340px;'>uniappopenlocation.js</span><span class="t" style='left:235.20px;top:529.00px;font:400 16px/30px "Liberation Sans", sans-serif;color:#dfe1e5;letter-spacing:-3.297px;'>__</span><span class="t" style='left:249.30px;top:529.00px;font:400 16px/30px "Liberation Sans", sans-serif;color:#dfe1e5;letter-spacing:0.311px;'>uniapppicker.js</span><span class="t" style='left:235.20px;top:559.00px;font:400 16px/30px "Liberation Sans", sans-serif;color:#dfe1e5;letter-spacing:-3.297px;'>__</span><span class="t" style='left:249.30px;top:559.00px;font:400 16px/30px "Liberation Sans", sans-serif;color:#dfe1e5;letter-spacing:0.268px;'>uniappquill.js</span><span class="t" style='left:235.20px;top:589.00px;font:400 16px/30px "Liberation Sans", sans-serif;color:#dfe1e5;letter-spacing:-3.297px;'>__</span><span class="t" style='left:249.30px;top:589.00px;font:400 16px/30px "Liberation Sans", sans-serif;color:#dfe1e5;letter-spacing:0.160px;'>uniappquillimageresize.js</span><span class="t" style='left:235.20px;top:619.00px;font:400 16px/30px "Liberation Sans", sans-serif;color:#dfe1e5;letter-spacing:-3.297px;'>__</span><span class="t" style='left:249.30px;top:619.00px;font:400 16px/30px "Liberation Sans", sans-serif;color:#dfe1e5;letter-spacing:-0.087px;'>uniappscan.js</span><span class="t" style='left:235.20px;top:649.00px;font:400 16px/30px "Liberation Sans", sans-serif;color:#dfe1e5;letter-spacing:-3.297px;'>__</span><span class="t" style='left:249.30px;top:649.00px;font:400 16px/30px "Liberation Sans", sans-serif;color:#dfe1e5;letter-spacing:0.038px;'>uniappsuccess.png</span><span class="t" style='left:235.20px;top:679.00px;font:400 16px/30px "Liberation Sans", sans-serif;color:#dfe1e5;letter-spacing:-3.297px;'>__</span><span class="t" style='left:249.30px;top:679.00px;font:400 16px/30px "Liberation Sans", sans-serif;color:#dfe1e5;letter-spacing:0.411px;'>uniappview.html</span><span class="t" style='left:234.70px;top:709.00px;font:400 16px/30px "Liberation Sans", sans-serif;color:#dfe1e5;letter-spacing:-0.123px;'>app.css</span><span class="t" style='left:234.70px;top:739.00px;font:400 16px/30px "Liberation Sans", sans-serif;color:#dfe1e5;letter-spacing:0.390px;'>app-config.js</span><span class="t" style='left:234.70px;top:769.00px;font:400 16px/30px "Liberation Sans", sans-serif;color:#dfe1e5;letter-spacing:0.283px;'>app-config-service.js</span><span class="t" style='left:234.70px;top:799.00px;font:400 16px/30px "Liberation Sans", sans-serif;color:#dfe1e5;letter-spacing:0.154px;'>app-service.js</span><span class="t" style='left:234.70px;top:829.00px;font:400 16px/30px "Liberation Sans", sans-serif;color:#dfe1e5;letter-spacing:0.211px;'>manifest.json</span><span class="t" style='left:234.70px;top:859.00px;font:400 16px/30px "Liberation Sans", sans-serif;color:#dfe1e5;letter-spacing:0.333px;'>uni-app-view.umd.js</span><span class="t" style='left:163.90px;top:889.00px;font:400 16px/30px "Liberation Sans", sans-serif;color:#dfe1e5;letter-spacing:0.420px;'>data</span><span class="t" style='left:187.90px;top:919.00px;font:400 16px/30px "Liberation Sans", sans-serif;color:#dfe1e5;letter-spacing:0.458px;'>dcloud_control.xml</span><span class="t" style='left:187.90px;top:949.00px;font:400 16px/30px "Liberation Sans", sans-serif;color:#dfe1e5;letter-spacing:0.530px;'>dcloud_error.html</span><span class="t" style='left:187.90px;top:979.00px;font:400 16px/30px "Liberation Sans", sans-serif;color:#dfe1e5;letter-spacing:0.438px;'>dcloud_properties.xml</span><span class="t" style='left:139.90px;top:1009.00px;font:400 16px/30px "Liberation Sans", sans-serif;color:#dfe1e5;letter-spacing:0.233px;'>res</span><span class="t" style='left:139.90px;top:1039.00px;font:400 16px/30px "Liberation Sans", sans-serif;color:#dfe1e5;letter-spacing:0.233px;'>res</span><span class="t" style='left:115.90px;top:1069.00px;font:400 16px/30px "Liberation Sans", sans-serif;color:#dfe1e5;letter-spacing:0.079px;'>Gradle Scripts</span><span class="t" style='left:166.10px;top:1039.00px;font:400 16px/30px "Liberation Sans", sans-serif;color:#868a91;letter-spacing:0.318px;'>(generated)</span><span class="t" style='left:32.80px;top:1208.00px;font:400 16px/30px "Liberation Sans", sans-serif;color:#a3a7ae;letter-spacing:0.289px;'>HBuilder-Integrate-AS</span><span class="t" style='left:239.40px;top:1208.00px;font:400 16px/30px "Liberation Sans", sans-serif;color:#a3a7ae;letter-spacing:0.442px;'>simpleDemo</span><span class="t" style='left:362.60px;top:1208.00px;font:400 16px/30px "Liberation Sans", sans-serif;color:#a3a7ae;letter-spacing:-0.064px;'>src</span><span class="t" style='left:428.50px;top:1208.00px;font:400 16px/30px "Liberation Sans", sans-serif;color:#a3a7ae;letter-spacing:0.337px;'>main</span><span class="t" style='left:493.80px;top:1208.00px;font:400 16px/30px "Liberation Sans", sans-serif;color:#a3a7ae;letter-spacing:-0.330px;'>assets</span><span class="t" style='left:569.00px;top:1208.00px;font:400 16px/30px "Liberation Sans", sans-serif;color:#a3a7ae;letter-spacing:0.420px;'>data</span><span class="t" style='left:655.90px;top:1208.00px;font:400 16px/30px "Liberation Sans", sans-serif;color:#a3a7ae;letter-spacing:0.453px;'>dcloud_control.xml</span><span class="t" style='left:1420.60px;top:1208.00px;font:400 16px/30px "Liberation Sans", sans-serif;color:#a3a7ae;letter-spacing:-0.625px;'>6:1</span><span class="t" style='left:1464.00px;top:1208.00px;font:400 16px/30px "Liberation Sans", sans-serif;color:#a3a7ae;letter-spacing:-2.472px;'>LF</span><span class="t" style='left:1499.70px;top:1208.00px;font:400 16px/30px "Liberation Sans", sans-serif;color:#6f737a;letter-spacing:-0.482px;'>UTF-8</span><span class="t" style='left:1608.30px;top:1208.00px;font:400 16px/30px "Liberation Sans", sans-serif;color:#6f737a;letter-spacing:-0.521px;'>4 spaces</span><span class="t" style='left:1568.20px;top:1203.20px;font:400 25.5px/34px "Liberation Mono", monospace;color:rgba(205,205,205,0.92);letter-spacing:1.9px;-webkit-text-stroke:0.5px rgba(205,205,205,0.92);'>doit@</span>
</body></html>
